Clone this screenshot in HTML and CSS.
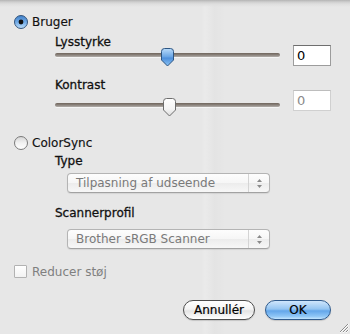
FILE: index.html
```html
<!DOCTYPE html>
<html lang="da">
<head>
<meta charset="utf-8">
<title>Bruger / ColorSync</title>
<link rel="stylesheet" href="styles.css">
</head>
<body>
<div class="dialog">
  <div class="radio-row">
    <svg class="radio" width="14" height="14" viewBox="0 0 14 14">
      <defs>
        <linearGradient id="rb" x1="0" y1="0" x2="0" y2="1">
          <stop offset="0" stop-color="#3f7fc8"/>
          <stop offset="0.5" stop-color="#6fa9e6"/>
          <stop offset="1" stop-color="#bfe0fb"/>
        </linearGradient>
      </defs>
      <circle cx="7" cy="7" r="6.5" fill="url(#rb)" stroke="#34557c"/>
      <circle cx="7" cy="7" r="2.4" fill="#111"/>
    </svg>
    <span>Bruger</span>
  </div>

  <div class="group">
    <div class="label lbl-bright">Lysstyrke</div>
    <div class="slider-row">
      <div class="slider">
        <div class="track"></div>
        <svg class="thumb" style="left:105px" width="15" height="19" viewBox="0 0 15 19">
          <defs>
            <linearGradient id="tb" x1="0" y1="0" x2="0" y2="1">
              <stop offset="0" stop-color="#b9dbfa"/>
              <stop offset="0.45" stop-color="#6ea8e6"/>
              <stop offset="0.55" stop-color="#4d8fdb"/>
              <stop offset="1" stop-color="#8cc4f4"/>
            </linearGradient>
          </defs>
          <path d="M1.5 3.5 Q1.5 0.5 4.5 0.5 H10.5 Q13.5 0.5 13.5 3.5 V12 L7.5 18 L1.5 12 Z" fill="url(#tb)" stroke="#2d5582"/>
        </svg>
      </div>
      <div class="field field-bright">0</div>
    </div>

    <div class="label lbl-contrast">Kontrast</div>
    <div class="slider-row row-contrast">
      <div class="slider">
        <div class="track"></div>
        <svg class="thumb" style="left:107px" width="15" height="19" viewBox="0 0 15 19">
          <defs>
            <linearGradient id="tw" x1="0" y1="0" x2="0" y2="1">
              <stop offset="0" stop-color="#ffffff"/>
              <stop offset="0.6" stop-color="#f4f4f4"/>
              <stop offset="1" stop-color="#dcdcdc"/>
            </linearGradient>
          </defs>
          <path d="M1.5 3.5 Q1.5 0.5 4.5 0.5 H10.5 Q13.5 0.5 13.5 3.5 V12 L7.5 18 L1.5 12 Z" fill="url(#tw)" stroke="#6d6d6d"/>
        </svg>
      </div>
      <div class="field field-contrast">0</div>
    </div>
  </div>

  <div class="radio-row row-colorsync">
    <svg class="radio" width="14" height="14" viewBox="0 0 14 14">
      <defs>
        <linearGradient id="rw" x1="0" y1="0" x2="0" y2="1">
          <stop offset="0" stop-color="#d4d4d4"/>
          <stop offset="0.5" stop-color="#f2f2f2"/>
          <stop offset="1" stop-color="#ffffff"/>
        </linearGradient>
      </defs>
      <circle cx="7" cy="7" r="6.5" fill="url(#rw)" stroke="#7a7a7a"/>
    </svg>
    <span>ColorSync</span>
  </div>

  <div class="group">
    <div class="label lbl-type">Type</div>
    <div class="popup popup-type">
      <span class="popup-text">Tilpasning af udseende</span>
      <span class="popup-arrows">
        <svg width="7" height="11" viewBox="0 0 7 11">
          <path d="M3.5 1 L6 4 H1 Z" fill="#8a8a8a"/>
          <path d="M3.5 10 L6 7 H1 Z" fill="#8a8a8a"/>
        </svg>
      </span>
    </div>
    <div class="label lbl-profile">Scannerprofil</div>
    <div class="popup popup-profile">
      <span class="popup-text">Brother sRGB Scanner</span>
      <span class="popup-arrows">
        <svg width="7" height="11" viewBox="0 0 7 11">
          <path d="M3.5 1 L6 4 H1 Z" fill="#8a8a8a"/>
          <path d="M3.5 10 L6 7 H1 Z" fill="#8a8a8a"/>
        </svg>
      </span>
    </div>
  </div>

  <div class="check-row">
    <span class="checkbox"></span>
    <span>Reducer støj</span>
  </div>

  <div class="buttons">
    <div class="btn btn-cancel">Annullér</div>
    <div class="btn btn-ok">OK</div>
  </div>

  <svg class="grip" width="12" height="12" viewBox="0 0 12 12">
    <path d="M11 3 L3 11 M11 6 L6 11 M11 9 L9 11" stroke="#8c8c8c" stroke-width="1"/>
    <path d="M12 3 L3 12 M12 6 L6 12 M12 9 L9 12" stroke="#fbfbfb" stroke-width="1"/>
  </svg>
</div>
</body>
</html>
```

FILE: styles.css
```css
html, body {
  margin: 0;
  padding: 0;
}

body {
  width: 350px;
  height: 334px;
  overflow: hidden;
  font-family: "DejaVu Sans", "Noto Sans", sans-serif;
  font-size: 12px;
  color: #111;
  background:
    linear-gradient(to bottom, #b4b4b4 0, #cfcfcf 2px, #dedede 4px, rgba(232,232,232,0) 7px),
    linear-gradient(to right, rgba(255,255,255,0) 201px, rgba(255,255,255,0.14) 205px, rgba(0,0,0,0.015) 215px, rgba(255,255,255,0) 225px),
    #e7e7e7;
}

.dialog {
  position: relative;
  height: 334px;
  box-sizing: border-box;
  padding: 15px 19px 0 14px;
}

.radio-row {
  display: flex;
  align-items: center;
  gap: 4px;
  height: 14px;
  -webkit-text-stroke: 0.15px #111;
}

.radio {
  display: block;
  flex: none;
}

.row-colorsync {
  margin-top: 19px;
}

.group {
  margin-left: 41px;
}

.label {
  line-height: 12px;
  height: 12px;
  -webkit-text-stroke: 0.3px #111;
}

.lbl-bright {
  margin-top: 7px;
}

.lbl-contrast {
  margin-top: 12px;
}

.lbl-type {
  margin-top: 5px;
}

.lbl-profile {
  margin-top: 14px;
}

.slider-row {
  display: flex;
  align-items: flex-start;
  gap: 13px;
  height: 19px;
}

.row-contrast {
  margin-top: 7px;
}

.slider {
  position: relative;
  width: 225px;
  height: 19px;
}

.track {
  position: absolute;
  left: 0;
  right: 0;
  top: 5px;
  height: 4px;
  border-radius: 2px;
  background: linear-gradient(to bottom, #6f655c 0, #8b837c 50%, #b3afab 100%);
  box-shadow: 0 1px 0 rgba(255,255,255,0.6);
}

.thumb {
  position: absolute;
  top: 0;
  display: block;
}

.field {
  width: 38px;
  height: 21px;
  box-sizing: border-box;
  background: #fff;
  border: 1px solid #9c9c9c;
  border-top-color: #6e6e6e;
  padding: 2px 0 0 3px;
  font-size: 13px;
  line-height: 16px;
}

.field-bright {
  margin-top: -3px;
  color: #000;
}

.field-contrast {
  margin-top: -8px;
  color: #8a8a8a;
  border-color: #d0d0d0;
  border-top-color: #bdbdbd;
}

.popup {
  display: flex;
  width: 203px;
  height: 20px;
  box-sizing: border-box;
  margin-left: 12px;
  border: 1px solid #b4b4b4;
  border-bottom-color: #a2a2a2;
  border-radius: 4px;
  background: linear-gradient(to bottom, #fdfdfd 0, #f6f6f6 50%, #ececec 51%, #f7f7f7 100%);
  box-shadow: 0 1px 1px rgba(0,0,0,0.08);
  color: #7a7a7a;
}

.popup-type {
  margin-top: 6px;
}

.popup-profile {
  margin-top: 10px;
}

.popup-text {
  flex: 1;
  padding-left: 8px;
  line-height: 18px;
  font-size: 12px;
}

.popup-arrows {
  width: 20px;
  border-left: 1px solid #d4d4d4;
  display: flex;
  align-items: center;
  justify-content: center;
}

.popup-arrows svg {
  display: block;
}

.check-row {
  display: flex;
  align-items: center;
  gap: 5px;
  height: 13px;
  margin-top: 16px;
  color: #7f7f7f;
}

.checkbox {
  width: 13px;
  height: 13px;
  box-sizing: border-box;
  border: 1px solid #b2b2b2;
  border-radius: 1px;
  background: linear-gradient(to bottom, #ffffff, #f2f2f2);
}

.buttons {
  display: flex;
  justify-content: flex-end;
  gap: 10px;
  margin-top: 22px;
}

.btn {
  height: 20px;
  box-sizing: border-box;
  border-radius: 10px;
  border: 1px solid #4d4d4d;
  display: flex;
  align-items: center;
  justify-content: center;
  font-size: 12px;
  color: #000;
  -webkit-text-stroke: 0.2px #000;
  box-shadow: 0 1px 1px rgba(0,0,0,0.15);
}

.btn-cancel {
  width: 72px;
  background: linear-gradient(to bottom, #ffffff 0, #f4f4f4 45%, #e4e4e4 55%, #f6f6f6 85%, #ffffff 100%);
}

.btn-ok {
  width: 66px;
  border-color: #2f5a8c;
  background: linear-gradient(to bottom, #cfe6fc 0, #94c5f2 45%, #63a6ea 55%, #8fc6f6 85%, #c4e6ff 100%);
}

.grip {
  position: absolute;
  right: 1px;
  bottom: 1px;
  display: block;
}
```
